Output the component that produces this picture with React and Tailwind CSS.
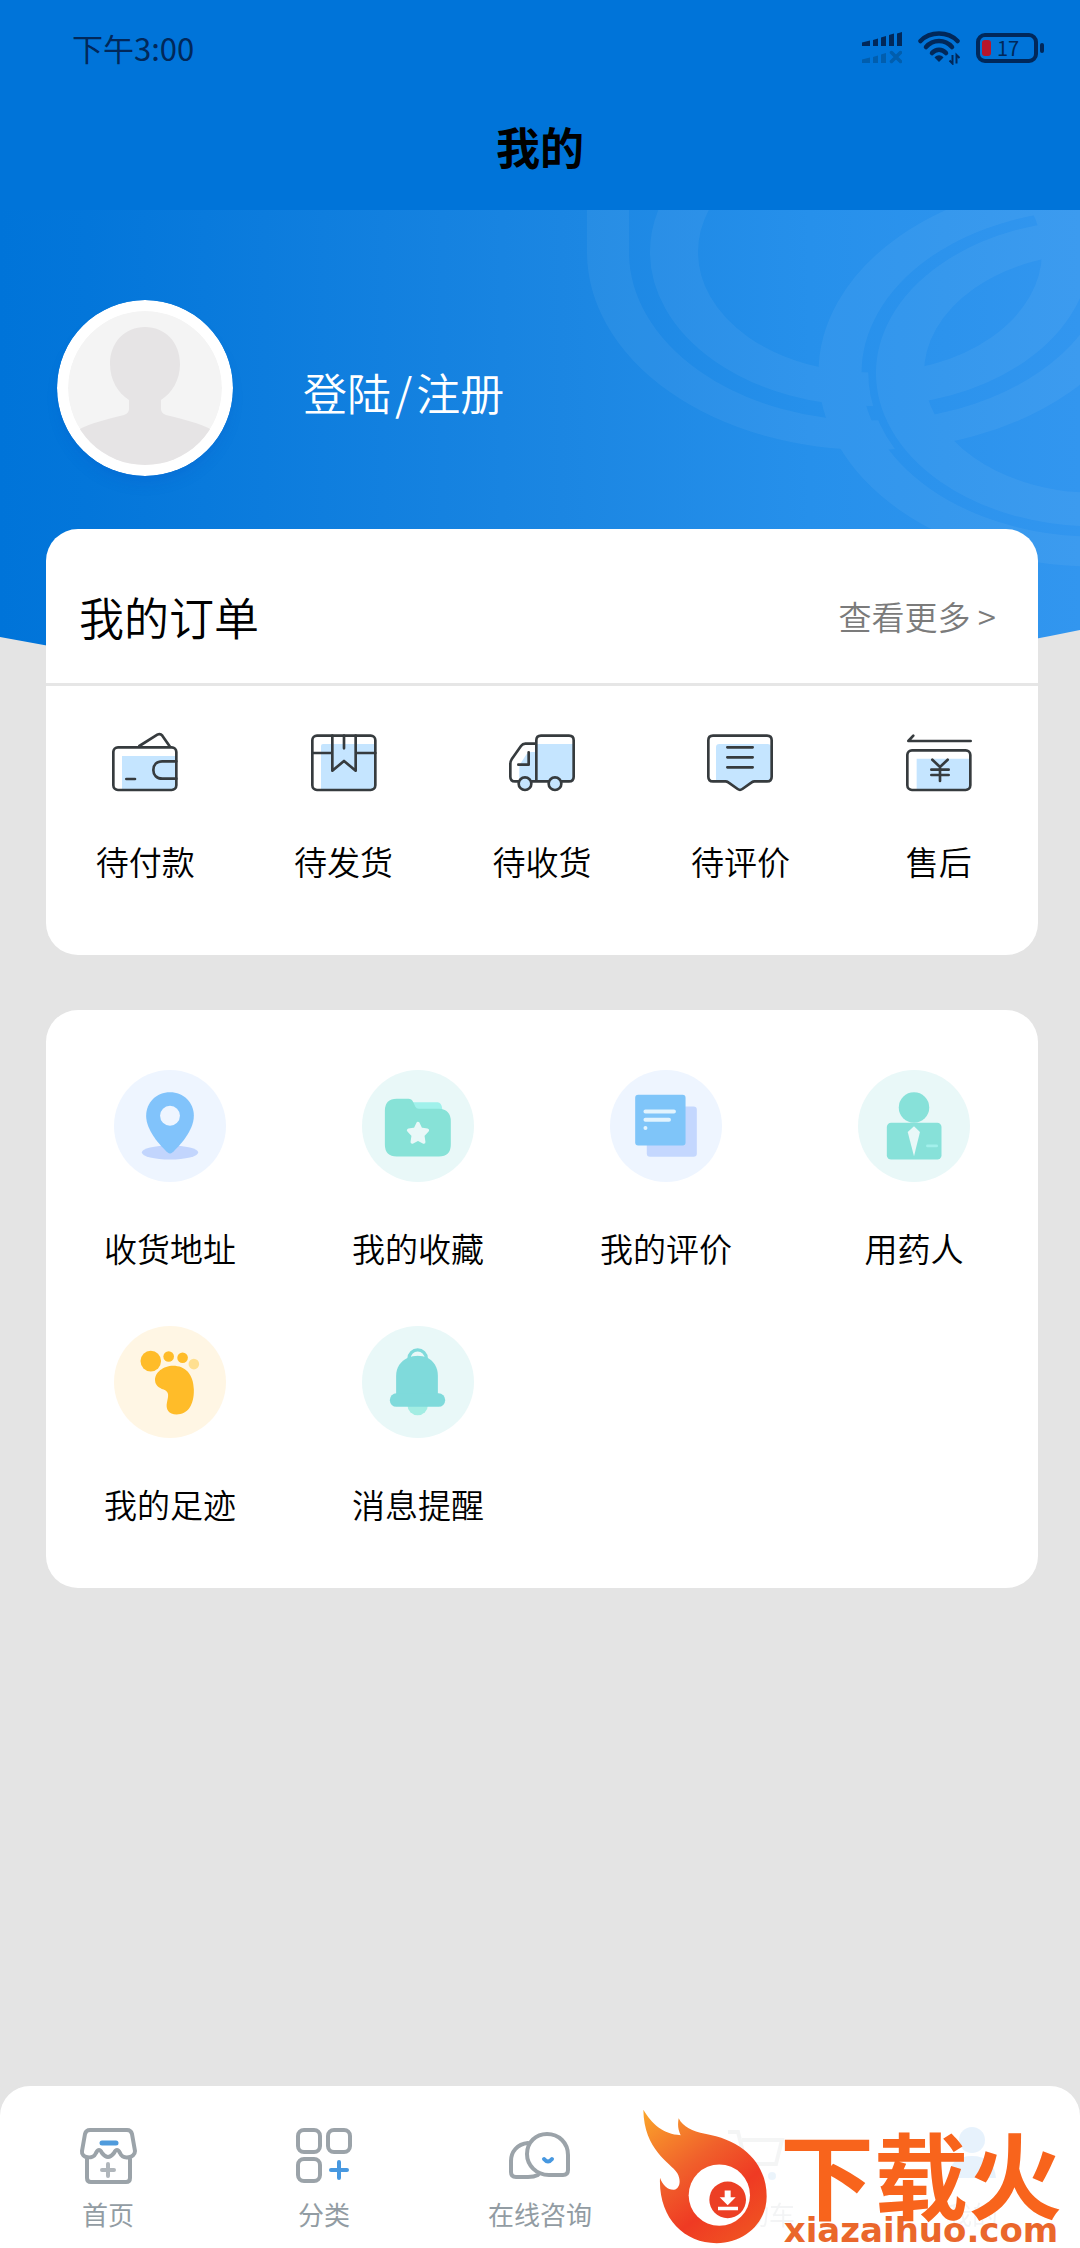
import clsx from 'clsx'

const LINE = { fill: 'none', stroke: '#363b3e', strokeWidth: 8, strokeLinecap: 'round', strokeLinejoin: 'round' }
const NAV_LINE = { fill: 'none', stroke: '#9ba3a9', strokeWidth: 4, strokeLinecap: 'round', strokeLinejoin: 'round' }

/* Status bar icons */
const SignalIcon = () => (
  <svg viewBox="0 0 40 32" className="w-10 h-8">
    <g fill="#01285a">
      <path d="M0 10.500l8-2v5.500H0zM11 8l5-1.500V14h-5zM19 5.500l5-1.500v10h-5zM27 3l5-1.500V14h-5zM35 1.500l5-1.500v14h-5z" />
    </g>
    <g fill="#015eae">
      <path d="M0 27.500l8-2V31H0zM11 25l5-1.500V31h-5zM19 22.500l5-1.500v10h-5z" />
      <path d="M29.500 20.500l9 9M38.500 20.500l-9 9" stroke="#015eae" strokeWidth="3.500" strokeLinecap="round" />
    </g>
  </svg>
)

const WifiIcon = () => (
  <svg viewBox="0 0 42 34" className="w-[42px] h-[34px]">
    <g fill="none" stroke="#01285a" strokeWidth="4.500" strokeLinecap="round">
      <path d="M2.500 10C12 0 30 0 39.500 10" />
      <path d="M8 16c7-8 19-8 26 0" />
      <path d="M14 22c4-4.500 10-4.500 14 0" />
    </g>
    <path d="M16.500 26.500c2.500-3 6.500-3 9 0L21 31z" fill="#01285a" />
    <path d="M34.500 24v8.500l-3-3M38.500 32.500V24l3 3" fill="none" stroke="#01285a" strokeWidth="2" />
  </svg>
)

const Battery = () => (
  <div className="flex items-center gap-0.5">
    <div className="flex items-center gap-1.5 w-[62px] h-[30px] rounded-[9px] border-4 border-[#01285a] px-0.5">
      <span className="w-[9px] h-4 rounded-[3px] bg-[#b8152c]" />
      <span className="text-[20px] leading-none text-[#01285a]">17</span>
    </div>
    <span className="w-1 h-2.5 rounded-full bg-[#01285a]" />
  </div>
)

/* Order icons */
const WalletIcon = () => (
  <>
    <path d="M39 90H201V190H39z" fill="#c5e5ff" />
    <g {...LINE}>
      <rect x="13" y="64" width="189" height="128" rx="14" />
      <path d="M202 106H160c-17 0-27 11-27 26s10 26 27 26h42" />
      <path d="M52 159h26M91 60l54-34q9-5 15 3l22 32" />
    </g>
  </>
)

const BoxIcon = () => (
  <>
    <path d="M39 60q0-6 6-6H200V190H39z" fill="#c5e5ff" />
    <g {...LINE}>
      <rect x="13" y="29" width="189" height="163" rx="14" />
      <path d="M13 81h60M143 81h59M73 29v105l35-29 35 29V29M108 29v38" />
    </g>
  </>
)

const TruckIcon = () => (
  <>
    <path d="M91 54H202V166H40V118L62 84q6-6 14-6h15z" fill="#c5e5ff" />
    <g {...LINE}>
      <path d="M91 166V43q0-14 14-14h84q14 0 14 14v109q0 14-14 14h-22M127 166H78M36 166H27q-14 0-14-14v-38q0-8 5-16l27-38q5-7 13-7h33" />
      <path d="M68 79v37H37" />
      <circle cx="57" cy="173" r="19" fill="#c5e5ff" />
      <circle cx="147" cy="173" r="19" fill="#c5e5ff" />
    </g>
  </>
)

const CommentIcon = () => (
  <>
    <path d="M36 64q0-10 10-10H192q8 0 10 8V166H146l-38 26-38-26H36z" fill="#c5e5ff" />
    <g {...LINE}>
      <path d="M27 29H189q14 0 14 14V152q0 14-14 14H152q-5 0-9 3l-28 20q-7 5-14 0L73 169q-4-3-9-3H27q-14 0-14-14V43q0-14 14-14z" />
      <path d="M70 64h76M70 94h76M70 124h76" />
    </g>
  </>
)

const RefundIcon = () => (
  <>
    <path d="M41 98H201V190H41z" fill="#c5e5ff" />
    <g {...LINE}>
      <path d="M203 45H16l15-16" />
      <rect x="13" y="73" width="189" height="119" rx="14" />
      <path d="M88 101l23 22 23-22M85 131h52M85 147h52M111 124v41" />
    </g>
  </>
)

/* Service icons, drawn on a 338 unit disc */
const PinIcon = () => (
  <>
    <circle cx="169" cy="169" r="169" fill="#eef5ff" />
    <ellipse cx="169" cy="249" rx="85" ry="21" fill="#c2d5fd" />
    <path
      d="M169 67c-41 0-72 31-72 71 0 44 42 90 65 111q7 6 14 0c23-21 65-67 65-111 0-40-31-71-72-71z"
      fill="#81c3fb"
    />
    <circle cx="169" cy="138" r="30" fill="#eef5ff" />
  </>
)

const FolderIcon = () => (
  <>
    <circle cx="169" cy="169" r="169" fill="#e9f8f8" />
    <path d="M150 97h78q12 0 14 20v8H150z" fill="#a0f1eb" />
    <path
      d="M105 87h35q10 0 14 9l7 15q3 6 10 6h61q36 2 36 38v70q0 36-36 36H105q-36 0-36-36V123q0-36 36-36z"
      fill="#87e2d7"
    />
    <path
      d="M169 162l8 17 20 3-14 15 3 20-17-9-17 9 3-20-14-15 20-3z"
      fill="#e9f8f8"
      stroke="#e9f8f8"
      strokeWidth="11"
      strokeLinejoin="round"
    />
  </>
)

const NotesIcon = () => (
  <>
    <circle cx="169" cy="169" r="169" fill="#eef5ff" />
    <rect x="111" y="110" width="151" height="152" rx="10" fill="#c4d7fe" />
    <rect x="76" y="75" width="152" height="153" rx="9" fill="#7fc5f9" />
    <path d="M107 125h86M107 150h71M107 175h0" stroke="#e2f4fe" strokeWidth="12" strokeLinecap="round" />
  </>
)

const PatientIcon = () => (
  <>
    <circle cx="169" cy="169" r="169" fill="#e9f8f8" />
    <circle cx="169" cy="113" r="46" fill="#87e1d9" />
    <rect x="87" y="159" width="165" height="111" rx="13" fill="#87e1d9" />
    <path d="M169 170l18 17-18 73-19-73z" fill="#e9f8f8" />
    <path d="M210 229h27" stroke="#a2f0eb" strokeWidth="9" strokeLinecap="round" />
  </>
)

const FootIcon = () => (
  <>
    <circle cx="169" cy="169" r="169" fill="#fff6e4" />
    <g fill="#ffbc29">
      <circle cx="111" cy="106" r="31" />
      <circle cx="165" cy="92" r="16" />
      <circle cx="207" cy="96" r="16" />
      <path d="M124 165c-2-25 26-45 54-45 37 0 62 25 63 72 1 48-19 75-52 75-24 0-34-16-29-37 4-17 8-31-10-38-15-6-25-13-26-27z" />
    </g>
    <circle cx="241" cy="115" r="16" fill="#ffdf8f" />
  </>
)

const BellIcon = () => (
  <>
    <circle cx="169" cy="169" r="169" fill="#e9f8f8" />
    <circle cx="168" cy="238" r="31" fill="#a3ede3" />
    <circle cx="168" cy="98" r="26" fill="none" stroke="#7fdadb" strokeWidth="10" />
    <path d="M103 210v-60c0-25 14-44 35-54q30-12 60 0c18 10 31 29 31 54v60z" fill="#7fdadb" />
    <rect x="84" y="203" width="167" height="41" rx="20" fill="#7fdadb" />
    <path d="M153 90q15-12 30 0-15-4-30 0z" fill="#e9f8f8" />
  </>
)

/* Tab bar icons */
const ShopIcon = () => (
  <>
    <g {...NAV_LINE}>
      <path d="M14 6h37q4 0 5 4l3 17c0 7-12 9-15 2q-3-6-6 0-6 8-12 0-3-6-6 0c-3 7-15 5-14-2L9 10q1-4 5-4z" />
      <path d="M11 35v19q0 4 4 4h35q4 0 4-4V35" />
    </g>
    <path d="M26 46h12M32 40v12" stroke="#b0b6bb" strokeWidth="4" strokeLinecap="round" />
    <path d="M26 19h14" stroke="#4f9bdc" strokeWidth="5" strokeLinecap="round" />
  </>
)

const CategoryIcon = () => (
  <>
    <g {...NAV_LINE}>
      <rect x="6" y="6" width="22" height="22" rx="6" />
      <rect x="36" y="6" width="22" height="22" rx="6" />
      <rect x="6" y="35" width="22" height="22" rx="6" />
    </g>
    <path d="M39 46h16M47 38v16" stroke="#4798e0" strokeWidth="4" strokeLinecap="round" />
  </>
)

const ChatIcon = () => (
  <>
    <g {...NAV_LINE}>
      <path d="M55 51H41C28 51 19 41 19 30c0-12 9-20 20-20 12 0 21 9 21 21v15q0 5-5 5z" />
      <path d="M20 19C9 20 3 28 3 37v11q0 5 5 5h12q6 0 10-2" />
    </g>
    <path d="M36 35q4 5 8 0" fill="none" stroke="#4798e0" strokeWidth="4" strokeLinecap="round" />
  </>
)

const CartIcon = () => (
  <>
    <path d="M4 8h10l8 32h30l6-24H18" fill="none" stroke="#9ba3a9" strokeWidth="4" />
    <circle cx="26" cy="52" r="4" fill="#4798e0" />
    <circle cx="48" cy="52" r="4" fill="#4798e0" />
  </>
)

const MineIcon = () => (
  <>
    <circle cx="32" cy="16" r="13" fill="#1c86e8" />
    <path d="M8 54q2-22 24-22t24 22z" fill="#1c86e8" />
  </>
)

const ORDERS = [
  { label: '待付款', Icon: WalletIcon },
  { label: '待发货', Icon: BoxIcon },
  { label: '待收货', Icon: TruckIcon },
  { label: '待评价', Icon: CommentIcon },
  { label: '售后', Icon: RefundIcon },
]

const SERVICES = [
  { label: '收货地址', Icon: PinIcon },
  { label: '我的收藏', Icon: FolderIcon },
  { label: '我的评价', Icon: NotesIcon },
  { label: '用药人', Icon: PatientIcon },
  { label: '我的足迹', Icon: FootIcon },
  { label: '消息提醒', Icon: BellIcon },
]

const TABS = [
  { label: '首页', Icon: ShopIcon },
  { label: '分类', Icon: CategoryIcon },
  { label: '在线咨询', Icon: ChatIcon },
  { label: '购物车', Icon: CartIcon, faded: true },
  { label: '我的', Icon: MineIcon, faded: true },
]

const HeroBackground = () => (
  <svg viewBox="0 0 1080 490" preserveAspectRatio="none" className="absolute inset-x-0 top-0 w-full h-[490px]">
    <defs>
      <linearGradient id="hero" x1="0" y1="0" x2="1" y2="0">
        <stop offset="0" stopColor="#0074d9" />
        <stop offset="0.08" stopColor="#0376da" />
        <stop offset="0.52" stopColor="#1b86e2" />
        <stop offset="0.75" stopColor="#2690eb" />
        <stop offset="1" stopColor="#3296ef" />
      </linearGradient>
      <mask id="rings" maskUnits="userSpaceOnUse" x="0" y="0" width="1080" height="490">
        <g transform="scale(1 0.7)" fill="none" stroke="#fff">
          <path d="M608 0V60A262 262 0 0 0 1132 60V0" strokeWidth="42" />
          <circle cx="870" cy="60" r="196" strokeWidth="48" />
          <path d="M1033 18A226 226 0 0 0 1095 459" stroke="#000" strokeWidth="16" />
          <circle cx="1095" cy="233" r="255" strokeWidth="43" />
          <circle cx="1095" cy="233" r="195" strokeWidth="48" />
        </g>
      </mask>
    </defs>
    <path d="M0 0H1080V420Q540 532 0 427z" fill="url(#hero)" />
    <rect width="1080" height="430" fill="#fff" fillOpacity="0.05" mask="url(#rings)" />
  </svg>
)

const Avatar = () => (
  <svg viewBox="0 0 176 176" className="w-44 h-44 rounded-full shadow-lg shadow-blue-800/10">
    <clipPath id="face">
      <circle cx="88" cy="88" r="77" />
    </clipPath>
    <circle cx="88" cy="88" r="88" fill="#fff" />
    <g clipPath="url(#face)">
      <circle cx="88" cy="88" r="77" fill="#f4f4f4" />
      <path
        d="M88 27c-20 0-35 15-35 37 0 16 8 29 19 36v9c0 3-2 5-5 6-16 4-34 8-46 15v46h134v-46c-12-7-30-11-46-15-3-1-5-3-5-6v-9c11-7 19-20 19-36 0-22-15-37-35-37z"
        fill="#e6e4e5"
      />
    </g>
  </svg>
)

const SiteBadge = () => (
  <div className="absolute bottom-1 right-2 flex items-end">
    <svg viewBox="0 0 390 410" className="w-[130px] h-[137px]">
      <defs>
        <linearGradient id="flame" x1="0" y1="0" x2="0.7" y2="1">
          <stop offset="0" stopColor="#fba62b" />
          <stop offset="0.45" stopColor="#f0602b" />
          <stop offset="0.75" stopColor="#ef3a23" />
          <stop offset="1" stopColor="#f04f22" />
        </linearGradient>
      </defs>
      <g transform="translate(-60 -110)">
        <path
          d="M70 118c25 42 60 74 112 76-9-18-9-34-6-51 14 27 40 38 79 47 115 20 185 90 185 188 0 78-65 140-150 140-100 0-175-78-170-196 8 23 24 37 42 36 18-5 22-28 10-50C150 275 72 240 70 118z"
          fill="url(#flame)"
        />
        <circle cx="298" cy="374" r="92" fill="#fff" />
        <circle cx="323" cy="388" r="55" fill="#ec3f24" />
        <path d="M314 360h18v20h15l-24 24-24-24h15zM294 409h60v10h-60z" fill="#fff" />
      </g>
    </svg>
    <div className="flex flex-col items-center w-[302px] text-[#f8641c]">
      <span className="text-[94px] leading-[88px] font-bold">下载火</span>
      <span className="font-['DejaVu_Sans',sans-serif] text-[34px] leading-7 font-bold text-[#ea672b]">xiazaihuo.com</span>
    </div>
  </div>
)

const App = () => {
  return (
    <div className="min-h-screen flex flex-col bg-[#e4e4e4] text-black font-['Noto_Sans_CJK_SC',sans-serif]">
      {/* Status bar */}
      <div className="flex items-center justify-between h-24 pl-[72px] pr-9 bg-[#0074d9]">
        <span className="text-[31px] text-[#01285a]">下午3:00</span>
        <div className="flex items-center gap-4">
          <SignalIcon />
          <WifiIcon />
          <Battery />
        </div>
      </div>

      <header className="flex justify-center h-[114px] pt-5 bg-[#0074d9]">
        <h1 className="text-[44px] leading-[60px] font-bold">我的</h1>
      </header>

      <main className="relative flex-1 pl-[46px] pr-[42px] pb-20">
        <HeroBackground />

        <div className="relative">
          {/* Profile */}
          <div className="flex items-center gap-[70px] pt-[90px] pl-[11px]">
            <Avatar />
            <button type="button" className="flex gap-1 pt-2 text-[44px] leading-[60px] text-white font-[350]">
              <span>登陆</span>
              <span>/</span>
              <span>注册</span>
            </button>
          </div>

          {/* Orders */}
          <section className="mt-[53px] rounded-[32px] bg-white">
            <div className="flex items-center justify-between h-[157px] pt-[22px] pl-[33px] pr-[42px] border-b-3 border-[#e6e6e6]">
              <h2 className="text-[45px] font-[350]">我的订单</h2>
              <a href="#orders" className="text-[33px] text-[#7b7b7b] font-[350]">查看更多 &gt;</a>
            </div>
            <div className="grid grid-cols-5 pt-10 pb-[73px]">
              {ORDERS.map(({ label, Icon }) => (
                <button key={label} type="button" className="flex flex-col items-center gap-[42px]">
                  <svg viewBox="0 0 216 216" className="w-[72px] h-[72px]">
                    <Icon />
                  </svg>
                  <span className="text-[33px] leading-[42px] font-[350]">{label}</span>
                </button>
              ))}
            </div>
          </section>

          {/* Services */}
          <section className="grid grid-cols-4 gap-y-[57px] mt-[55px] pt-[60px] pb-[63px] rounded-[32px] bg-white">
            {SERVICES.map(({ label, Icon }) => (
              <button key={label} type="button" className="flex flex-col items-center gap-[45px]">
                <svg viewBox="0 0 338 338" className="w-28 h-28">
                  <Icon />
                </svg>
                <span className="text-[33px] leading-[42px] font-[350]">{label}</span>
              </button>
            ))}
          </section>
        </div>
      </main>

      {/* Tab bar */}
      <nav className="relative grid grid-cols-5 pt-[38px] pb-[18px] rounded-t-[30px] bg-white">
        {TABS.map(({ label, Icon, faded }) => (
          <a key={label} href={`#${label}`} className={clsx('flex flex-col items-center gap-2.5', faded && 'opacity-10')}>
            <svg viewBox="0 0 64 64" className="w-16 h-16">
              <Icon />
            </svg>
            <span className="text-[26px] leading-8 text-[#929ca3]">{label}</span>
          </a>
        ))}
        <SiteBadge />
      </nav>
    </div>
  )
}

export default App
